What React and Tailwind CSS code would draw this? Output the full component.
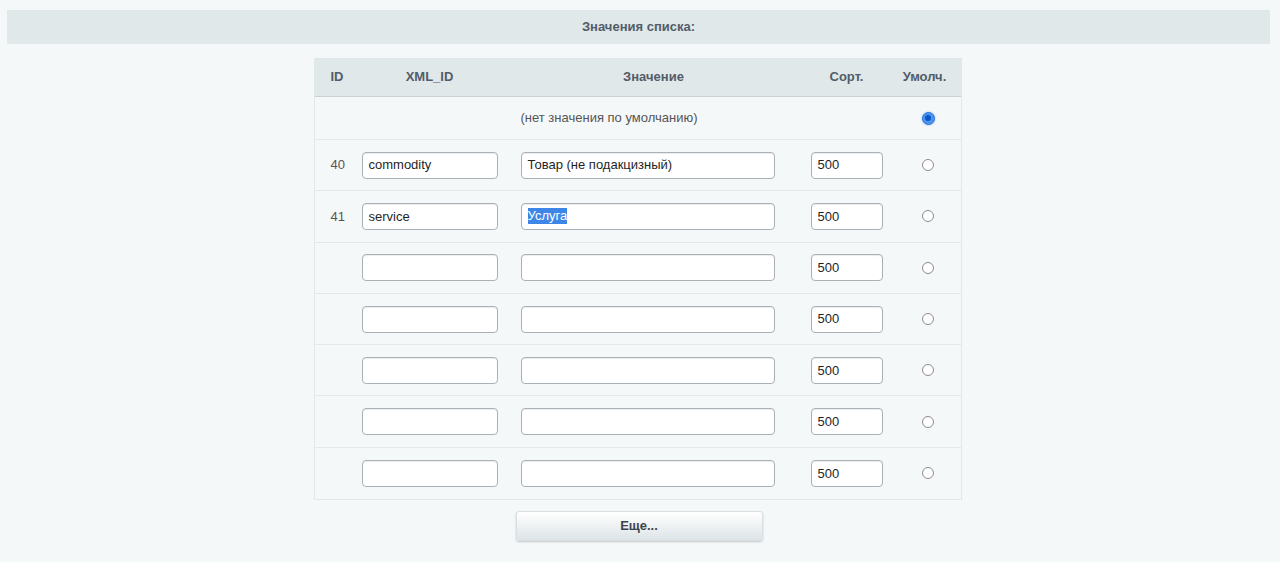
import React from "react";

const rows = [
  { id: "40", xml: "commodity", value: "Товар (не подакцизный)", sort: "500" },
  { id: "41", xml: "service", value: "Услуга", sort: "500", selected: true },
  { id: "", xml: "", value: "", sort: "500" },
  { id: "", xml: "", value: "", sort: "500" },
  { id: "", xml: "", value: "", sort: "500" },
  { id: "", xml: "", value: "", sort: "500" },
  { id: "", xml: "", value: "", sort: "500" },
];

const gridCols = "grid grid-cols-[47px_159px_290px_83px_1fr] items-center";

const Field = ({ width, children }) => (
  <div
    className={`${width} h-[27px] bg-white border border-[#a9b1b6] rounded-[4px] shadow-[inset_0_1px_1px_rgba(0,0,0,0.08)] flex items-center pl-[6px] text-[13px] text-[#1f1f1f]`}
  >
    {children}
  </div>
);

const Radio = ({ checked }) =>
  checked ? (
    <div className="w-[13px] h-[13px] rounded-full bg-[#4b95f0] border border-[#2f77d8] flex items-center justify-center shadow-[0_0_2px_rgba(59,130,246,0.6)]">
      <div className="w-[6px] h-[6px] rounded-full bg-[#0b56c4]" />
    </div>
  ) : (
    <div className="w-[12px] h-[12px] rounded-full bg-white border border-[#8c8c8c]" />
  );

export default function App() {
  return (
    <div
      className="min-h-[562px] bg-[#f5f8f9] pt-[10px] pl-[7px] pr-[10px]"
      style={{ fontFamily: '"Liberation Sans", Arial, sans-serif' }}
    >
      {/* Section title */}
      <div className="h-[34px] bg-[#e0e8ea] flex items-center justify-center text-[13px] font-bold text-[#535c69]">
        Значения списка:
      </div>

      {/* Values table */}
      <div className="mt-[14px] mx-auto w-[648px] border-x border-b border-[#e2e8ea] relative left-[-1px]">
        <div className={`${gridCols} h-[39px] bg-[#e0e8ea] border-b border-[#c8d1d5] text-[13px] font-bold text-[#535c69]`}>
          <div className="pl-4">ID</div>
          <div className="w-[136px] text-center">XML_ID</div>
          <div className="w-[254px] text-center pl-3">Значение</div>
          <div className="w-[72px] text-center">Сорт.</div>
          <div className="text-center pr-[5px]">Умолч.</div>
        </div>

        <div className={`${gridCols} h-[43px] border-b border-[#e4eaec] text-[13px] text-[#555]`}>
          <div />
          <div />
          <div>(нет значения по умолчанию)</div>
          <div />
          <div className="flex justify-center pl-[2px]">
            <Radio checked />
          </div>
        </div>

        {rows.map((row, i) => (
          <div
            key={i}
            className={`${gridCols} h-[51.3px] ${i < rows.length - 1 ? "border-b border-[#e4eaec]" : ""} text-[13px]`}
          >
            <div className="pl-4 text-[#555]">{row.id}</div>
            <div>
              <Field width="w-[136px]">{row.xml}</Field>
            </div>
            <div>
              <Field width="w-[254px]">
                {row.selected ? (
                  <span className="bg-[#3d86e8] text-white leading-[16px]">{row.value}</span>
                ) : (
                  row.value
                )}
              </Field>
            </div>
            <div>
              <Field width="w-[72px]">{row.sort}</Field>
            </div>
            <div className="flex justify-center pl-[2px]">
              <Radio />
            </div>
          </div>
        ))}
      </div>

      {/* More button */}
      <div className="flex justify-center mt-[11px] pl-[1px]">
        <button className="w-[247px] h-[30px] rounded-[3px] bg-gradient-to-b from-white to-[#dde4e7] border border-[#d9dfe2] shadow-[0_1px_2px_rgba(0,0,0,0.2)] text-[13px] font-bold text-[#3d444d]">
          Еще...
        </button>
      </div>
    </div>
  );
}
